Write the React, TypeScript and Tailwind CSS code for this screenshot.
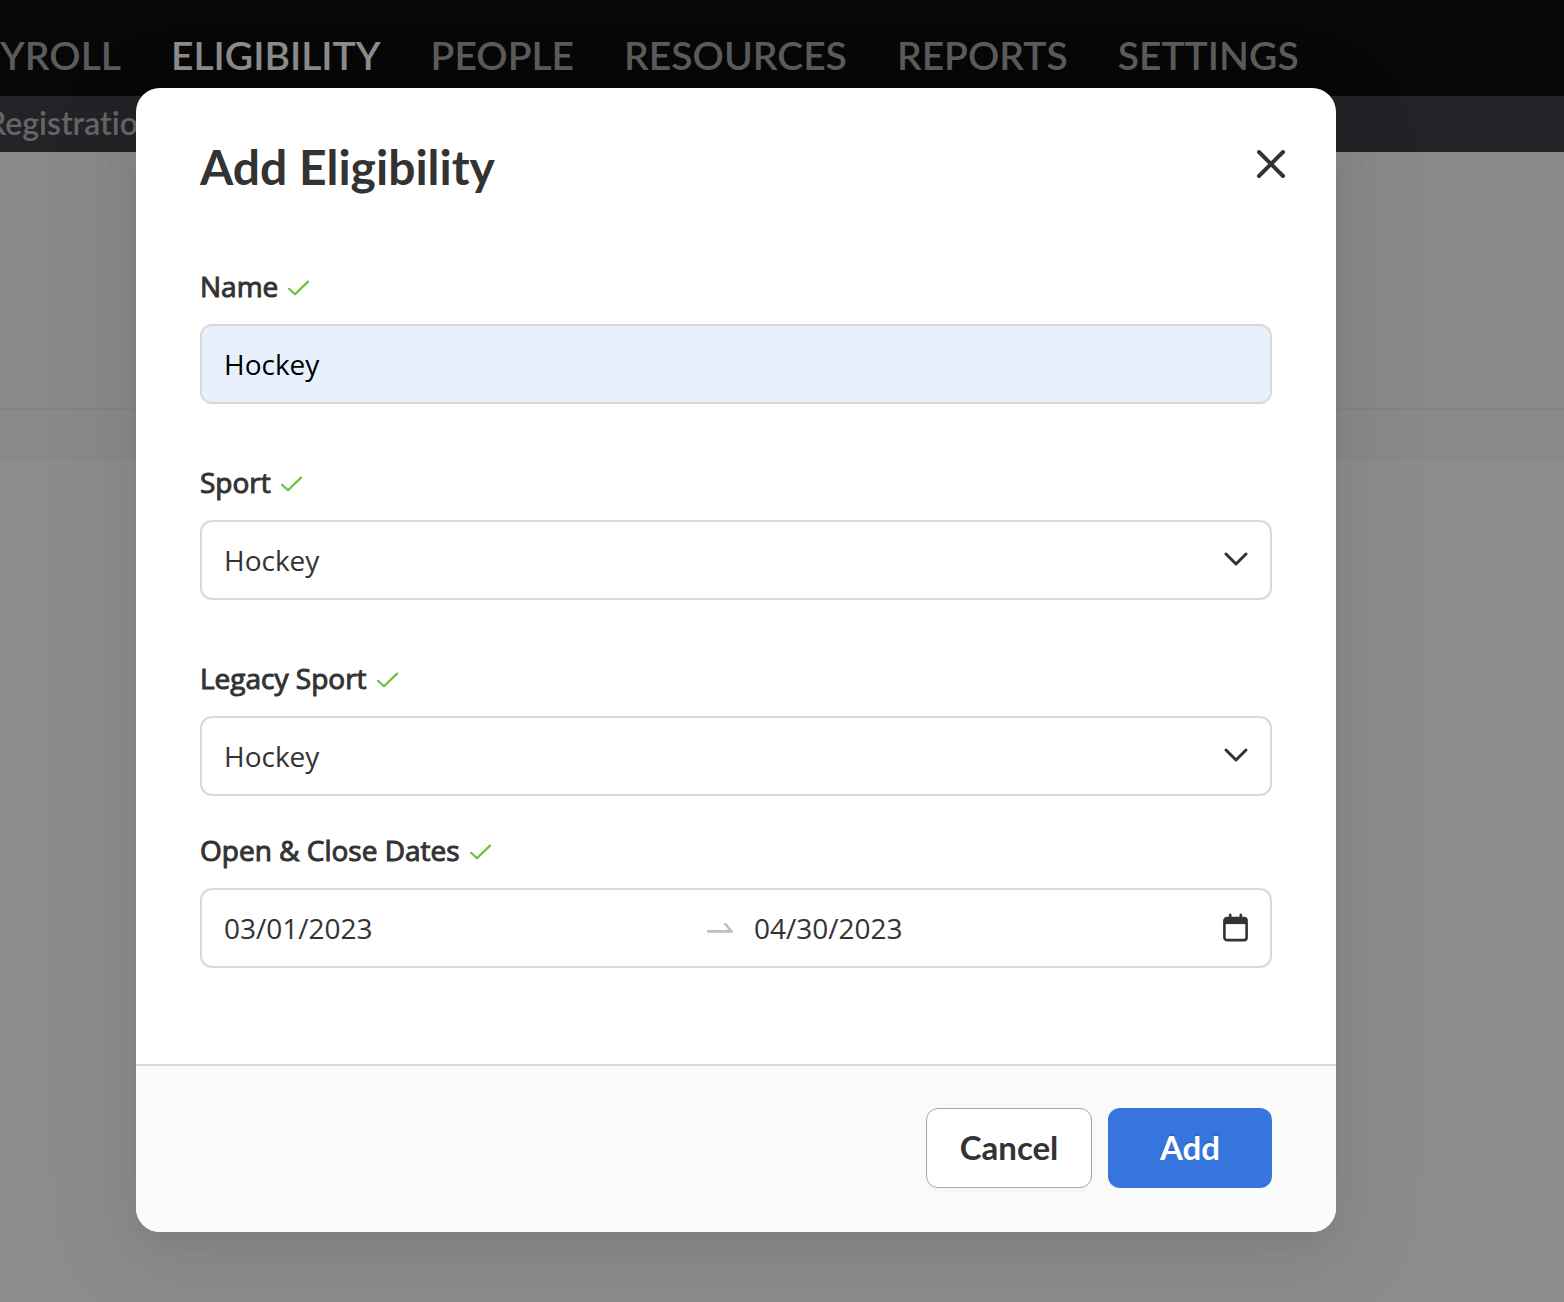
import { useState, type ReactNode } from "react";

const navItems = [
    { label: "YROLL", active: false },
    { label: "ELIGIBILITY", active: true },
    { label: "PEOPLE", active: false },
    { label: "RESOURCES", active: false },
    { label: "REPORTS", active: false },
    { label: "SETTINGS", active: false },
];

const sports = ["Hockey", "Baseball", "Basketball", "Soccer"];

const fieldBox =
    "h-20 w-full rounded-xl border-2 border-[#d9d9d9] px-[22px] text-[28px] outline-none";

const CheckMark = () => (
    <svg viewBox="0 0 24 20" className="mt-3 h-5 w-6" fill="none" aria-hidden="true">
        <path
            d="M3 10.8 9 16.2 22 3.6"
            stroke="#6cc03c"
            strokeWidth="2.2"
            strokeLinecap="round"
            strokeLinejoin="round"
        />
    </svg>
);

const ChevronMark = () => (
    <svg
        viewBox="0 0 24 16"
        className="pointer-events-none absolute right-6 top-[31px] h-4 w-6"
        fill="none"
        aria-hidden="true"
    >
        <path
            d="M2 3 12 13 22 3"
            stroke="#333"
            strokeWidth="3"
            strokeLinecap="round"
            strokeLinejoin="round"
        />
    </svg>
);

const FieldLabel = ({ htmlFor, children }: { htmlFor: string; children: ReactNode }) => (
    <div className="mb-4 flex h-[42px] items-start gap-2">
        <label
            htmlFor={htmlFor}
            className="text-[28px] leading-10 [-webkit-text-stroke:1px_#333]"
        >
            {children}
        </label>
        <CheckMark />
    </div>
);

const SelectField = ({ id, label }: { id: string; label: string }) => {
    const [value, setValue] = useState("Hockey");
    return (
        <div>
            <FieldLabel htmlFor={id}>{label}</FieldLabel>
            <div className="relative">
                <select
                    id={id}
                    value={value}
                    onChange={(e) => setValue(e.target.value)}
                    className={`${fieldBox} appearance-none bg-white`}
                >
                    {sports.map((sport) => (
                        <option key={sport}>{sport}</option>
                    ))}
                </select>
                <ChevronMark />
            </div>
        </div>
    );
};

const PageBackground = () => (
    <div className="min-h-screen bg-white font-['Lato',sans-serif]">
        <nav className="flex h-24 items-center gap-[50px] overflow-hidden bg-[#0d0d0d] pt-3.5 text-[39px] whitespace-nowrap">
            {navItems.map((item) => (
                <a
                    key={item.label}
                    href="#"
                    className={`font-semibold ${item.active ? "text-white" : "text-[#a6a6a6]"}`}
                >
                    {item.label}
                </a>
            ))}
        </nav>
        <div className="flex h-14 items-center overflow-hidden bg-[#3e4047] pb-0.5">
            <a
                href="#"
                className="-ml-3.5 text-[32px] font-semibold text-[#b8b8b8] [font-variant-ligatures:none]"
            >
                Registration
            </a>
        </div>
        <div className="h-64 bg-[#fafafa]" />
        <div className="h-[52px] border-t-2 border-[#f0f0f0] bg-[#fafafa]" />
    </div>
);

const DateRange = () => {
    const [open, setOpen] = useState("03/01/2023");
    const [close, setClose] = useState("04/30/2023");
    return (
        <div className={`${fieldBox} flex items-center bg-white`}>
            <input
                id="open-date"
                value={open}
                onChange={(e) => setOpen(e.target.value)}
                className="min-w-0 flex-1 outline-none"
            />
            <svg viewBox="0 0 1024 1024" className="mr-4 ml-3.5 size-9 shrink-0" fill="#bfbfbf" aria-hidden="true">
                <path d="M873.1 596.2l-164-208A32 32 0 00684 376h-64.8c-6.7 0-10.4 7.7-6.3 13l144.3 183H152c-4.4 0-8 3.6-8 8v60c0 4.4 3.6 8 8 8h695.9c26.8 0 41.7-30.8 25.2-51.8z" />
            </svg>
            <input
                aria-label="Close date"
                value={close}
                onChange={(e) => setClose(e.target.value)}
                className="min-w-0 flex-1 outline-none"
            />
            <svg viewBox="0 0 26 30" className="ml-1 h-[30px] w-[26px] shrink-0" fill="none" aria-hidden="true">
                <rect x="2.4" y="5.1" width="22.2" height="22" rx="2.6" stroke="#333" strokeWidth="2.6" />
                <path d="M2.4 5.1h22.2v6H2.4z" fill="#333" />
                <path d="M8.2 1.8v4M18.8 1.8v4" stroke="#333" strokeWidth="2.6" strokeLinecap="round" />
            </svg>
        </div>
    );
};

export default function App() {
    const [name, setName] = useState("Hockey");

    return (
        <div className="relative overflow-hidden">
            <PageBackground />
            <div className="absolute inset-0 flex items-start justify-center bg-black/45 pt-[88px] pr-[92px]">
                <div
                    role="dialog"
                    aria-labelledby="dialog-title"
                    className="w-full max-w-[1200px] overflow-hidden rounded-3xl bg-white font-['Open_Sans',sans-serif] text-[#333] shadow-[0_12px_32px_-16px_rgba(0,0,0,0.08),0_18px_56px_0_rgba(0,0,0,0.05),0_24px_96px_32px_rgba(0,0,0,0.03)]"
                >
                    <header className="flex items-start justify-between pt-12 pr-9 pl-16">
                        <h2
                            id="dialog-title"
                            className="font-['Lato',sans-serif] text-[48px] leading-[62px] font-bold"
                        >
                            Add Eligibility
                        </h2>
                        <button
                            type="button"
                            aria-label="Close"
                            className="flex size-14 items-center justify-center"
                        >
                            <svg viewBox="0 0 32 32" className="size-8" fill="none" aria-hidden="true">
                                <path
                                    d="M3 4 27 28M27 4 3 28"
                                    stroke="#333"
                                    strokeWidth="4"
                                    strokeLinecap="round"
                                />
                            </svg>
                        </button>
                    </header>

                    <div className="px-16 pt-[68px] pb-24">
                        <div className="flex flex-col gap-[58px]">
                            <div>
                                <FieldLabel htmlFor="name">Name</FieldLabel>
                                <input
                                    id="name"
                                    value={name}
                                    onChange={(e) => setName(e.target.value)}
                                    className={`${fieldBox} block bg-[#e8f0fe] text-black`}
                                />
                            </div>
                            <SelectField id="sport" label="Sport" />
                            <SelectField id="legacy-sport" label="Legacy Sport" />
                        </div>
                        <div className="mt-[34px]">
                            <FieldLabel htmlFor="open-date">Open &amp; Close Dates</FieldLabel>
                            <DateRange />
                        </div>
                    </div>

                    <footer className="flex justify-end gap-4 border-t-2 border-[#d9d9d9] bg-[#fafafa] px-16 pt-[42px] pb-11 font-['Lato',sans-serif] text-[33px] font-bold">
                        <button
                            type="button"
                            className="h-20 w-[166px] rounded-xl border border-[#a6a6a6] bg-white shadow-[0_4px_0_rgba(0,0,0,0.016)]"
                        >
                            Cancel
                        </button>
                        <button
                            type="button"
                            className="h-20 w-[164px] rounded-xl bg-[#3575dd] text-white [text-shadow:0_-2px_0_rgba(0,0,0,0.12)]"
                        >
                            Add
                        </button>
                    </footer>
                </div>
            </div>
        </div>
    );
}
